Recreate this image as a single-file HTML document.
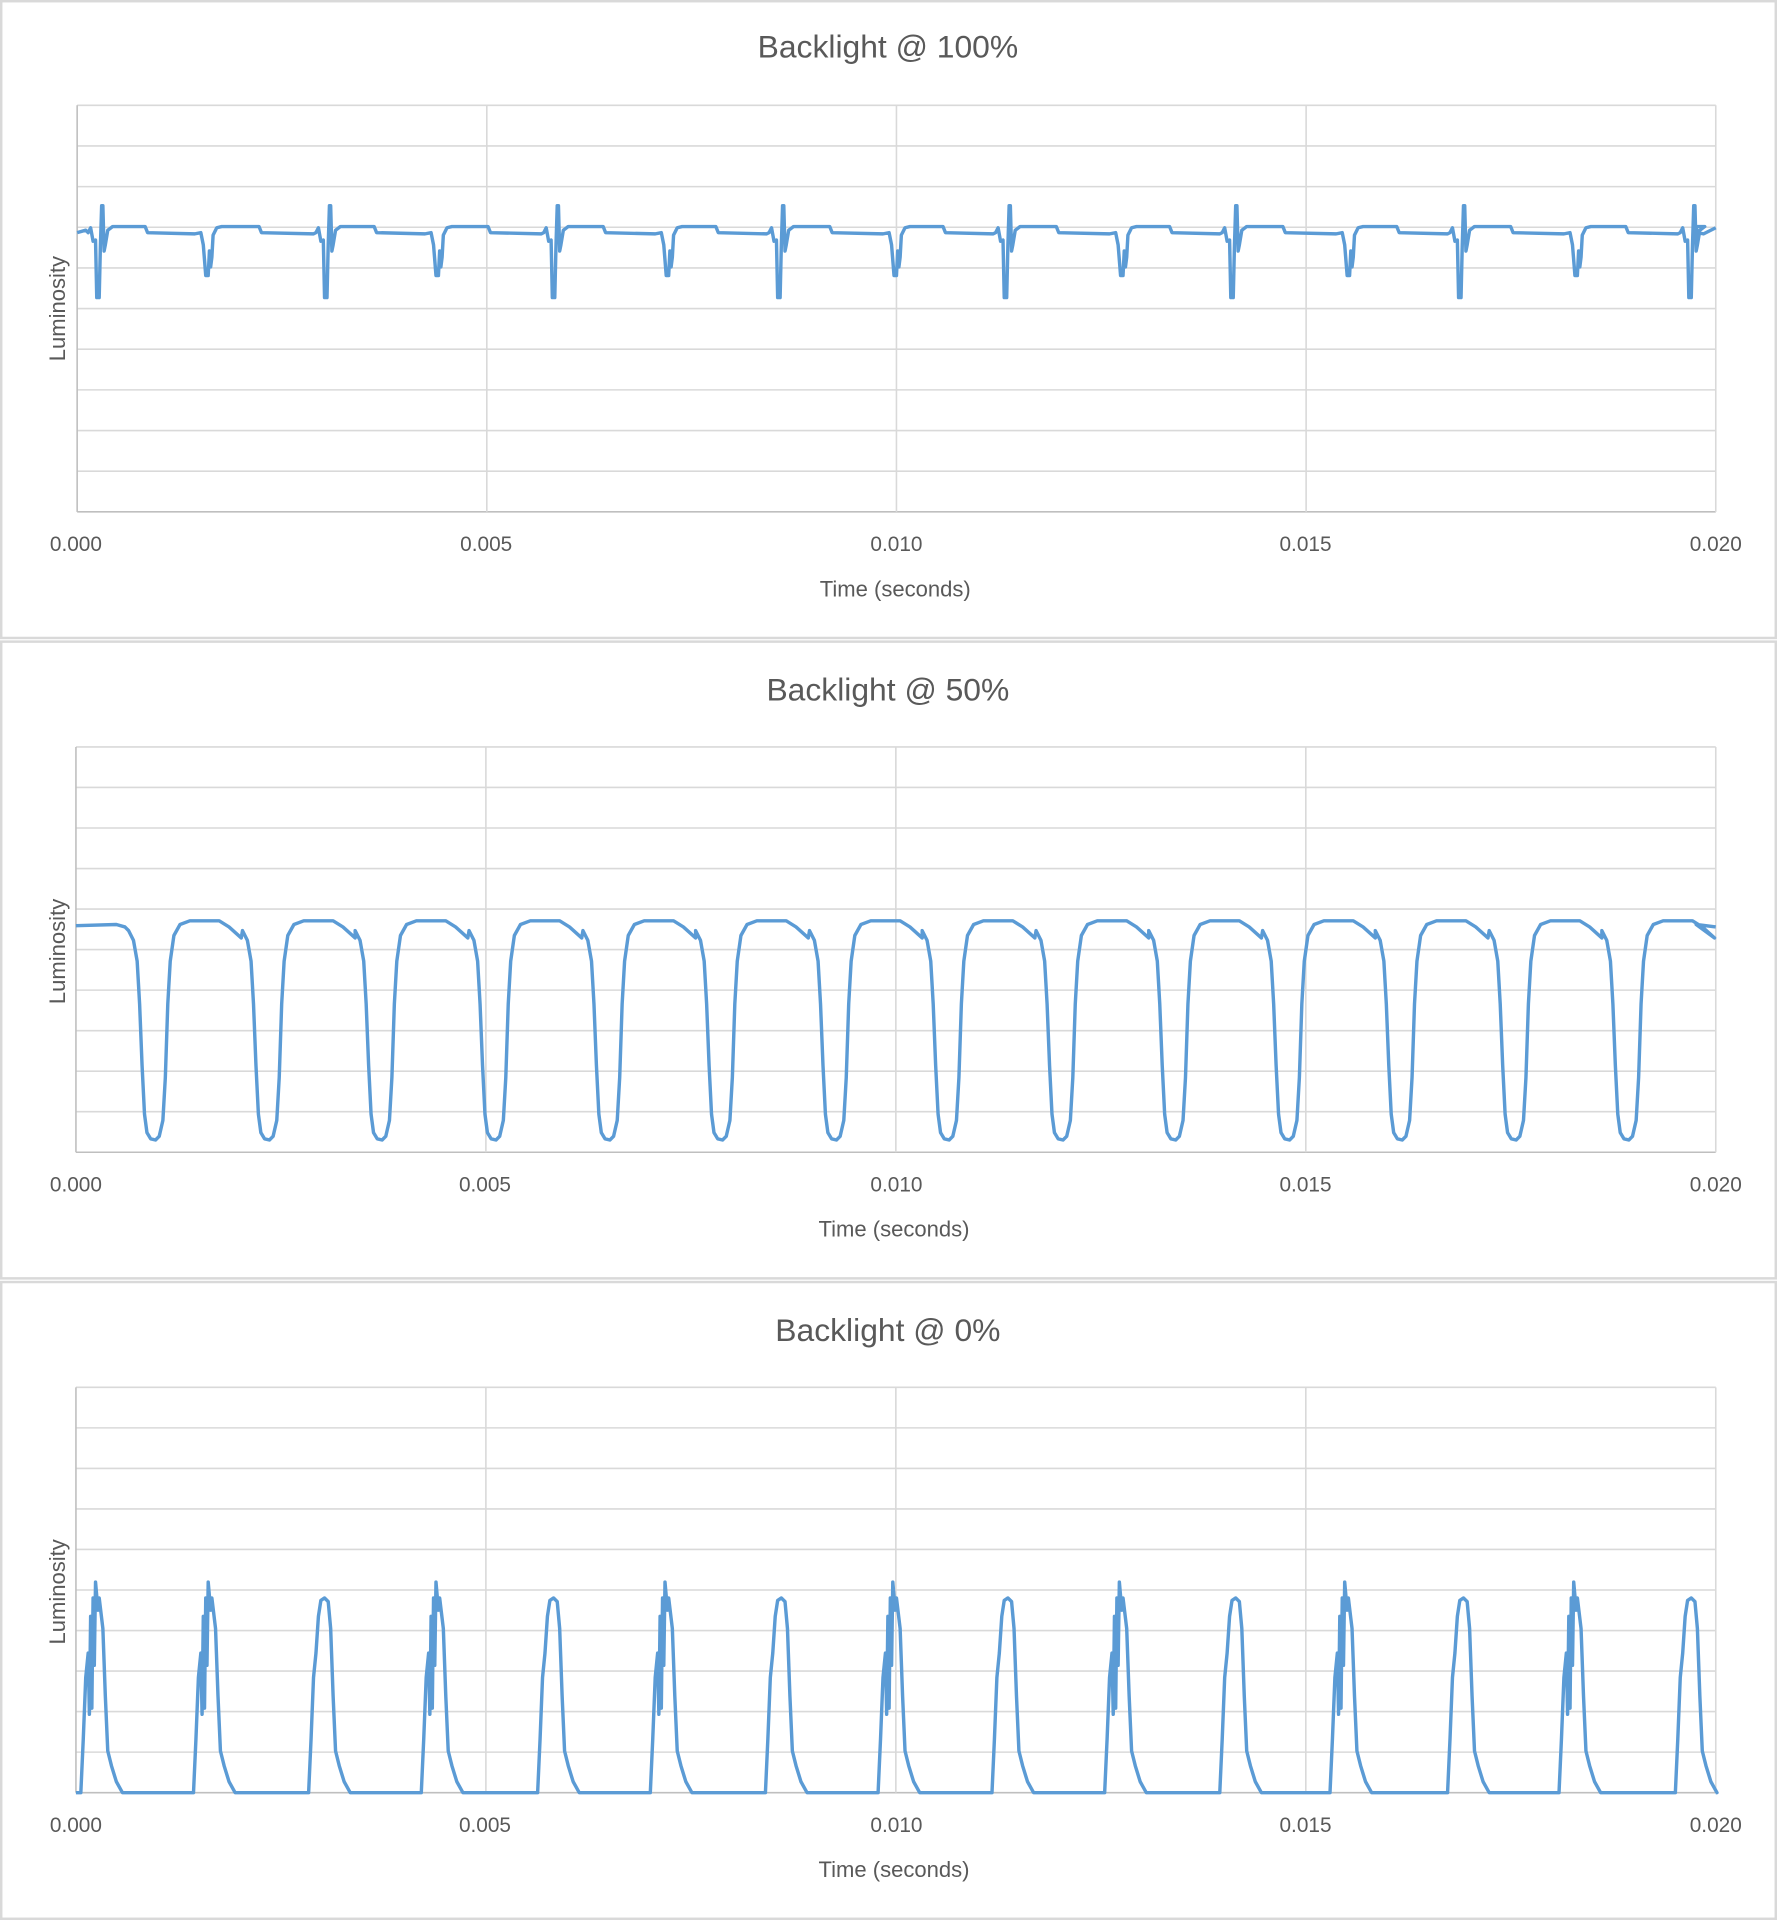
<!DOCTYPE html>
<html><head><meta charset="utf-8"><style>
html,body{margin:0;padding:0;background:#fff;}
svg{display:block;}
text{font-family:"Liberation Sans",sans-serif;fill:#595959;}
</style></head><body>
<svg id="s" width="1777" height="1920" viewBox="0 0 1451 1568" preserveAspectRatio="none" xmlns="http://www.w3.org/2000/svg">
<rect x="0" y="0" width="1451" height="1568" fill="#fff"/>
<g fill="none" stroke="#d9d9d9" stroke-width="2">
<rect x="1" y="1" width="1449" height="520"/>
<rect x="1" y="524" width="1449" height="520"/>
<rect x="1" y="1047" width="1449" height="520"/>
</g>
<g id="grid" stroke="#d9d9d9" stroke-width="1.3" fill="none"></g>
<g id="waves" stroke="#5b9bd5" stroke-width="2.8" fill="none" stroke-linejoin="round"></g>
<text x="725" y="47" font-size="26" text-anchor="middle">Backlight @ 100%</text>
<text x="725" y="572" font-size="26" text-anchor="middle">Backlight @ 50%</text>
<text x="725" y="1095" font-size="26" text-anchor="middle">Backlight @ 0%</text>
<g font-size="17" text-anchor="middle">
<text x="62" y="450">0.000</text><text x="397" y="450">0.005</text><text x="732" y="450">0.010</text><text x="1066" y="450">0.015</text><text x="1401" y="450">0.020</text>
<text x="62" y="973">0.000</text><text x="396" y="973">0.005</text><text x="732" y="973">0.010</text><text x="1066" y="973">0.015</text><text x="1401" y="973">0.020</text>
<text x="62" y="1496">0.000</text><text x="396" y="1496">0.005</text><text x="732" y="1496">0.010</text><text x="1066" y="1496">0.015</text><text x="1401" y="1496">0.020</text>
</g>
<g font-size="18" text-anchor="middle">
<text x="731" y="487">Time (seconds)</text>
<text x="730" y="1010">Time (seconds)</text>
<text x="730" y="1533">Time (seconds)</text>
<text transform="translate(53,252) rotate(-90)">Luminosity</text>
<text transform="translate(53,777) rotate(-90)">Luminosity</text>
<text transform="translate(53,1300) rotate(-90)">Luminosity</text>
</g>
</svg>
<script>
var NS="http://www.w3.org/2000/svg";
var grid=document.getElementById('grid'),waves=document.getElementById('waves');
function line(x1,y1,x2,y2,c){var l=document.createElementNS(NS,'line');l.setAttribute('x1',x1);l.setAttribute('y1',y1);l.setAttribute('x2',x2);l.setAttribute('y2',y2);if(c)l.setAttribute('stroke',c);grid.appendChild(l);}
function chart(x0,x1,y0,y1){
 for(var i=0;i<=10;i++){var y=y0+(y1-y0)*i/10;line(x0,y,x1,y,i==10?'#bfbfbf':null);}
 for(var j=0;j<=4;j++){var x=x0+(x1-x0)*j/4;line(x,y0,x,y1,j==0?'#bfbfbf':null);}
}
chart(63,1401,86,418);chart(62,1401,610,941);chart(62,1401,1133,1464);
function path(pts){var p=document.createElementNS(NS,'path');p.setAttribute('d','M'+pts.map(function(q){return q[0].toFixed(1)+','+q[1].toFixed(1)}).join(' L'));waves.appendChild(p);}
// chart 1
var sp=[80,169,266,357,452,545,636,731,821,916,1006,1101,1192,1287,1380];
var p1=[[63,190],[70,188]];
sp.forEach(function(s,i){var big=(i%2==0);
 if(big){p1.push([s-8,190],[s-6,186],[s-4,197],[s-2,196],[s-1,243],[s+1,243],[s+2,200],[s+3,168],[s+4,168],[s+5,205],[s+6,200],[s+8,188]);}
 else{p1.push([s-5,190],[s-3,200],[s-1,225],[s+1,225],[s+2,205],[s+3,218],[s+4,210],[s+5,192],[s+8,186]);}
 var n=sp[i+1]||1401;var mid=(s+n)/2;
 p1.push([s+12,185],[mid-6,185],[mid-4,190],[n-10,191]);
});
p1.push([1401,186]);path(p1);
// chart 2
var dc=[127,220,312,405,498,590,683,775,868,960,1053,1145,1238,1330];
var p2=[[62,756],[95,755],[102,757]];
dc.forEach(function(c,i){
 p2.push([c-22,760],[c-18,768],[c-15,785],[c-13,820],[c-11,870],[c-9,910],[c-7,925],[c-4,930],[c,931],[c+3,928],[c+6,915],[c+8,880],[c+10,820],[c+12,785],[c+15,764],[c+20,755],[c+28,752],[c+52,752],[c+60,757],[c+70,766]);
});
p2.push([1385,755],[1401,757]);path(p2);
// chart 3
var pc=[80,172,266,358,453,545,639,731,824,916,1010,1100,1196,1287,1382];
var p3=[[62,1464],[66,1464]];
pc.forEach(function(c,i){var sk=(i%2==1)||i==0;
 p3.push([c-14,1464],[c-12,1420],[c-10,1370],[c-8,1350]);
 if(sk){p3.push([c-7,1400],[c-6,1320],[c-5,1395],[c-4,1305],[c-3,1360],[c-2,1292],[c,1315],[c+1,1305]);}
 else{p3.push([c-6,1320],[c-4,1307],[c-1,1305],[c+2,1308]);}
 p3.push([c+4,1330],[c+6,1385],[c+8,1430],[c+11,1442],[c+15,1455],[c+20,1464]);
});
p3.push([1401,1464]);path(p3);
</script>
</body></html>
